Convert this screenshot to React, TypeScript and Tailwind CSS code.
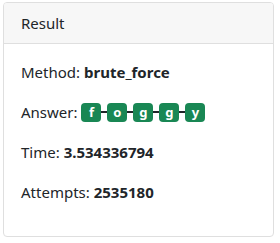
export default function App() {
  const letters = ["f", "o", "g", "g", "y"];
  return (
    <div className="w-[280px] h-[243px] bg-white pt-[2px] pl-[3px]" style={{ fontFamily: '"Noto Sans", sans-serif' }}>
      <div className="w-[271px] h-[235px] border border-[#dfdfdf] rounded-[4px] overflow-hidden flex flex-col">
        <div className="h-[41px] bg-[#f7f7f7] border-b border-[#dfdfdf] px-[17px] flex items-center text-[15px] text-[#212529]">
          Result
        </div>
        <div className="px-[17px] pt-[18px] text-[15px] text-[#212529] flex flex-col gap-[20px]">
          <div className="h-[20px] flex items-center">
            Method:&nbsp;<b className="font-bold">brute_force</b>
          </div>
          <div className="h-[20px] flex items-center">
            Answer:&nbsp;
            <div className="flex items-center">
              {letters.map((l, i) => (
                <div key={i} className="flex items-center">
                  {i > 0 && <div className="w-[6px] h-[2px] bg-[#212529]" />}
                  <div className="w-[20px] h-[19px] rounded-[4px] bg-[#198754] text-white text-[13px] font-bold flex items-center justify-center leading-none">
                    {l}
                  </div>
                </div>
              ))}
            </div>
          </div>
          <div className="h-[20px] flex items-center">
            Time:&nbsp;<b className="font-bold">3.534336794</b>
          </div>
          <div className="h-[20px] flex items-center">
            Attempts:&nbsp;<b className="font-bold">2535180</b>
          </div>
        </div>
      </div>
    </div>
  );
}
